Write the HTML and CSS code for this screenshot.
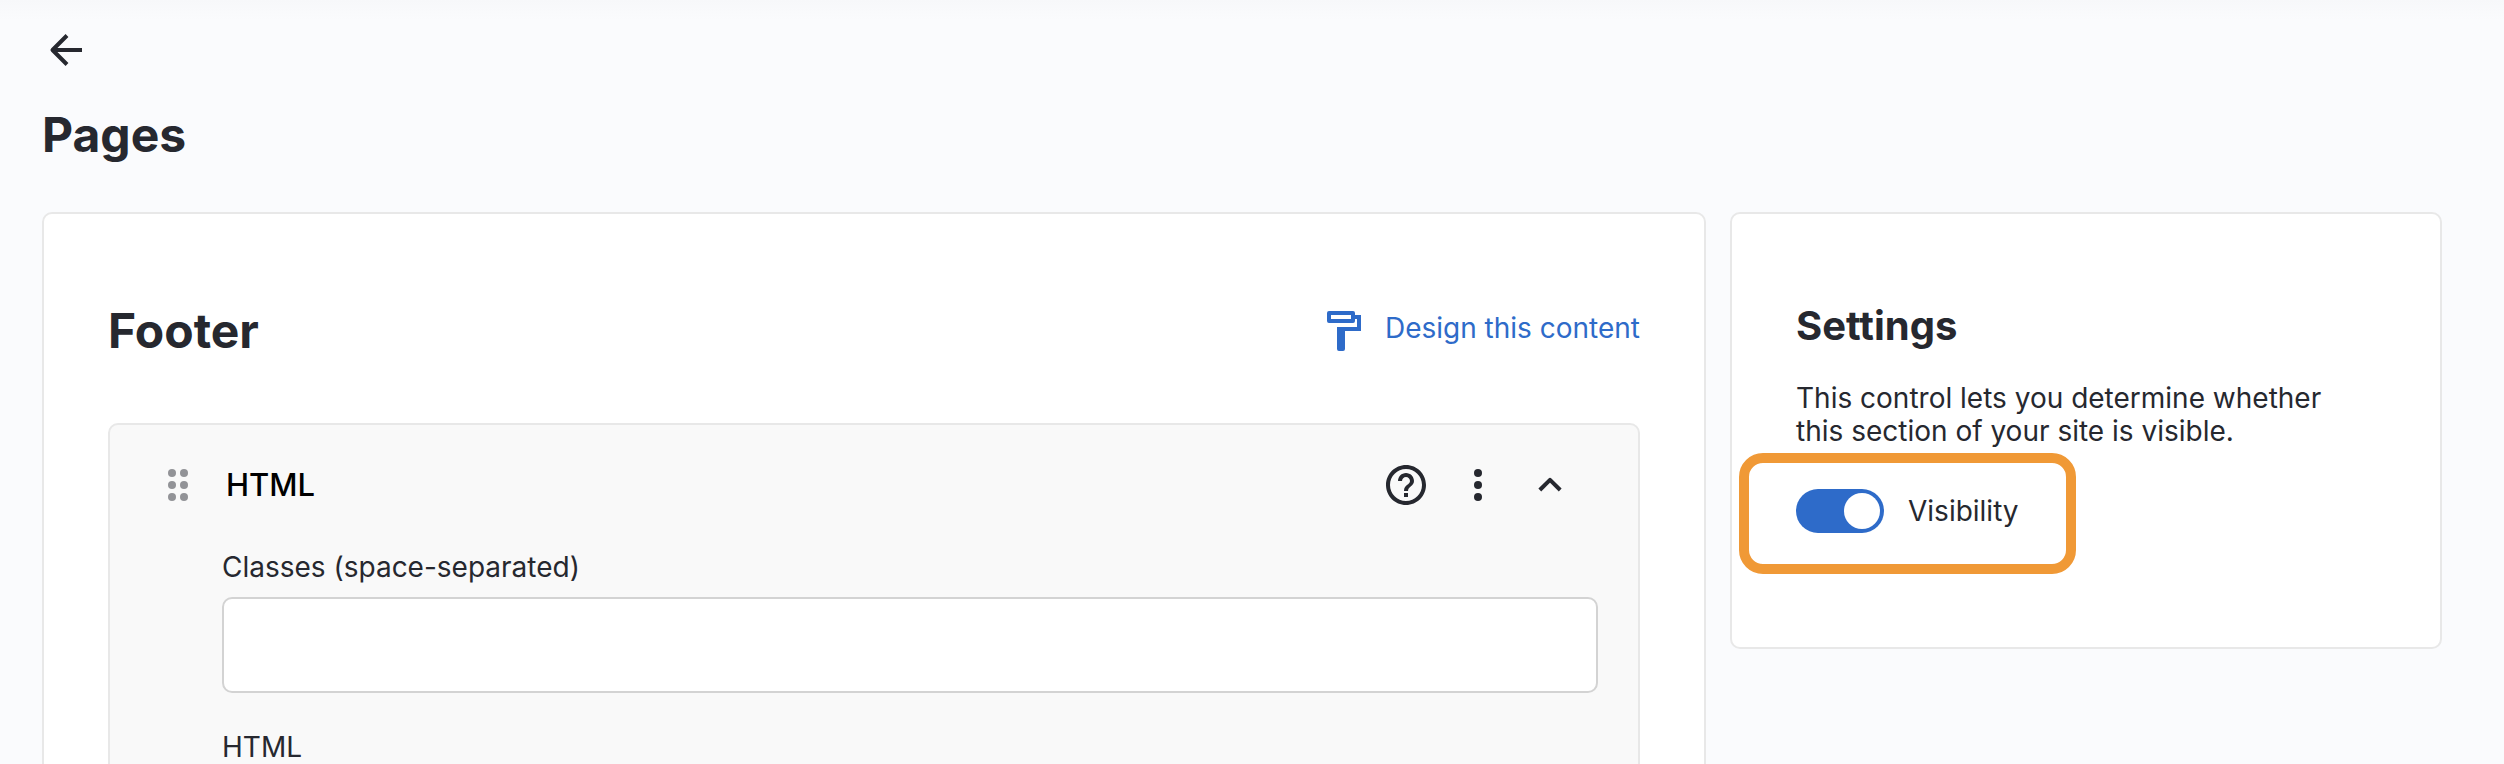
FILE: index.html
```html
<!DOCTYPE html>
<html lang="en">
<head>
<meta charset="utf-8">
<meta name="viewport" content="width=device-width, initial-scale=1">
<title>Pages</title>
<link rel="stylesheet" href="styles.css">
</head>
<body>
<div class="page">
  <header class="page-header">
    <button class="icon-button" type="button" aria-label="Back">
      <svg class="icon" viewBox="0 0 48 48" aria-hidden="true"><path class="stroke" d="M40 24H11M25 9.5 10.5 24 25 38.5"/></svg>
    </button>
    <h1 class="page-title">Pages</h1>
  </header>
  <div class="columns">
    <main class="card card-main">
      <div class="card-header">
        <h2 class="page-title">Footer</h2>
        <a class="design-link" href="#design">
          <svg class="icon" viewBox="0 0 48 48" aria-hidden="true"><path fill="currentColor" fill-rule="evenodd" d="M9 4H33Q35 4 35 6V8H41V24H25V42Q25 44 23 44H19Q17 44 17 42V20H37V12H35V14Q35 16 33 16H9Q7 16 7 14V6Q7 4 9 4ZM11 8V12H31V8Z"/></svg>
          <span class="design-text">Design this content</span>
        </a>
      </div>
      <section class="panel">
        <div class="panel-header">
          <button class="icon-button drag" type="button" aria-label="Move">
            <svg class="icon" viewBox="0 0 48 48" aria-hidden="true" fill="currentColor"><circle cx="18" cy="12" r="4"/><circle cx="30" cy="12" r="4"/><circle cx="18" cy="24" r="4"/><circle cx="30" cy="24" r="4"/><circle cx="18" cy="36" r="4"/><circle cx="30" cy="36" r="4"/></svg>
          </button>
          <h3 class="panel-title">HTML</h3>
          <div class="actions">
            <button class="icon-button" type="button" aria-label="Help">
              <svg class="icon" viewBox="0 0 24 24" aria-hidden="true"><path fill="currentColor" d="M11 18h2v-2h-2v2zm1-16C6.480 2 2 6.480 2 12s4.480 10 10 10 10-4.480 10-10S17.520 2 12 2zm0 18c-4.410 0-8-3.590-8-8s3.590-8 8-8 8 3.590 8 8-3.590 8-8 8zm0-14c-2.210 0-4 1.790-4 4h2c0-1.100.900-2 2-2s2 .900 2 2c0 2-3 1.750-3 5h2c0-2.250 3-2.500 3-5 0-2.210-1.790-4-4-4z"/></svg>
            </button>
            <button class="icon-button" type="button" aria-label="More">
              <svg class="icon" viewBox="0 0 48 48" aria-hidden="true" fill="currentColor"><circle cx="24" cy="12" r="4"/><circle cx="24" cy="24" r="4"/><circle cx="24" cy="36" r="4"/></svg>
            </button>
            <button class="icon-button" type="button" aria-label="Collapse">
              <svg class="icon" viewBox="0 0 48 48" aria-hidden="true"><path class="stroke" d="M13.800 29 24 18.800 34.200 29"/></svg>
            </button>
          </div>
        </div>
        <div class="fields">
          <div class="field">
            <label class="field-label" for="classes">Classes (space-separated)</label>
            <input class="control" id="classes" type="text">
          </div>
          <div class="field">
            <label class="field-label" for="html">HTML</label>
            <textarea class="control" id="html"></textarea>
          </div>
        </div>
      </section>
    </main>
    <aside class="card card-side">
      <h2 class="side-title">Settings</h2>
      <p class="side-text">This control lets you determine whether this section of your site is visible.</p>
      <label class="switch" for="visibility">
        <input class="toggle" id="visibility" type="checkbox" role="switch" checked>
        <span>Visibility</span>
      </label>
    </aside>
  </div>
</div>
</body>
</html>
```
FILE: styles.css
```css
* { box-sizing: border-box; }

body {
  margin: 0;
  background: #fafbfd;
  color: #26282f;
  font-family: Inter, "Liberation Sans", sans-serif;
  font-size: 28px;
  line-height: 33px;
}

h1, h2, h3, p { margin: 0; }

.page {
  display: flex;
  flex-direction: column;
  height: 100vh;
  overflow: hidden;
  padding: 26px 62px 0 42px;
  background: linear-gradient(#f7f8fa, #fafbfd 20px);
}

.page-header {
  display: flex;
  flex-direction: column;
  align-items: flex-start;
  gap: 32px;
  padding-bottom: 48px;
}

.page-title {
  font-size: 48px;
  font-weight: 700;
  line-height: 58px;
}

.icon-button {
  display: flex;
  padding: 0;
  border: 0;
  background: none;
  color: inherit;
  cursor: pointer;
}

.icon {
  display: block;
  flex: none;
  width: 48px;
  height: 48px;
}

.stroke {
  fill: none;
  stroke: currentColor;
  stroke-width: 4;
  stroke-linejoin: round;
}

.columns {
  display: grid;
  grid-template-columns: 208fr 89fr;
  gap: 24px;
  align-items: start;
}

.card {
  padding: 64px;
  border: 2px solid #e8e8e8;
  border-radius: 10px;
  background: #fff;
}

.card-header {
  display: flex;
  align-items: center;
  justify-content: space-between;
  min-height: 105px;
  margin-bottom: 40px;
}

.design-link {
  display: flex;
  align-items: center;
  gap: 17px;
  color: #2e6bc9;
  text-decoration: none;
}

.design-text { padding-bottom: 4px; }

.panel {
  padding: 36px 40px 40px;
  border: 2px solid #e8e8e8;
  border-radius: 10px;
  background: #f9f9f9;
}

.panel-header {
  display: flex;
  align-items: center;
  gap: 24px;
  padding-right: 24px;
}

.panel-title {
  color: #000;
  font-size: 31px;
  font-weight: 500;
  line-height: 40px;
}

.drag {
  margin-left: 4px;
  color: #929397;
}

.actions {
  display: flex;
  gap: 24px;
  margin-left: auto;
}

.fields {
  display: grid;
  gap: 38px;
  padding: 42px 0 0 72px;
}

.field {
  display: grid;
  gap: 13px;
}

.control {
  width: 100%;
  min-height: 96px;
  padding: 16px 24px;
  border: 2px solid #d3d3d3;
  border-radius: 10px;
  background: #fff;
  color: inherit;
  font: inherit;
}

.card-side { padding-top: 88px; }

.side-title {
  margin-bottom: 32px;
  font-size: 40px;
  font-weight: 700;
  line-height: 48px;
}

.side-text {
  margin-bottom: 41px;
  padding-right: 40px;
}

.switch {
  position: relative;
  display: inline-flex;
  align-items: center;
  gap: 24px;
  margin-bottom: 50px;
  vertical-align: top;
}

.switch::after {
  content: "";
  position: absolute;
  inset: -36px -57px -41px;
  border: 10px solid #f09936;
  border-radius: 24px;
  pointer-events: none;
}

.toggle {
  display: flex;
  align-items: center;
  justify-content: flex-end;
  appearance: none;
  width: 88px;
  height: 44px;
  margin: 0;
  padding: 4px;
  border-radius: 22px;
  background: #2e6bc9;
}

.toggle::before {
  content: "";
  width: 36px;
  height: 36px;
  border-radius: 50%;
  background: #fff;
}

.toggle:not(:checked) {
  justify-content: flex-start;
  background: #929397;
}
```
